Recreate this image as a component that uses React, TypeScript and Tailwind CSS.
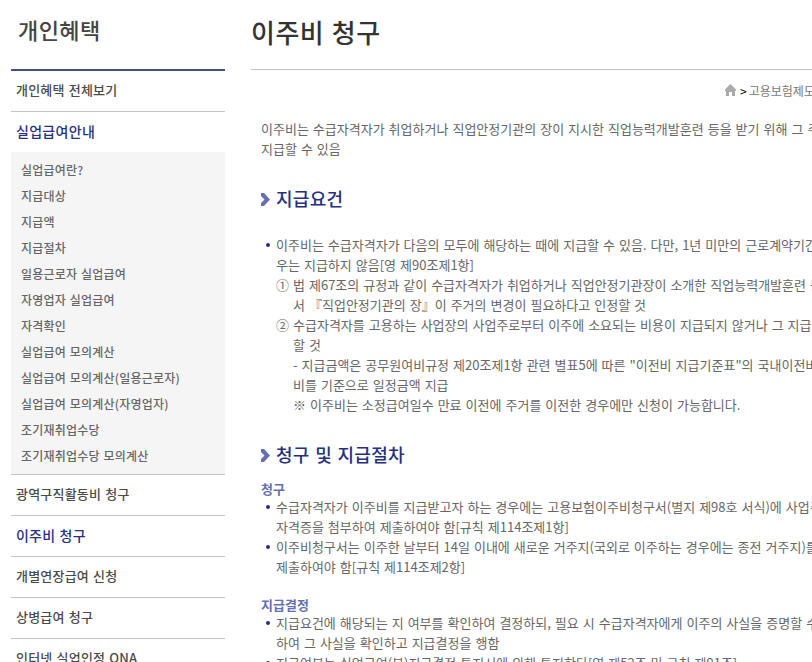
import React from "react";

const subMenu = [
  "실업급여란?",
  "지급대상",
  "지급액",
  "지급절차",
  "일용근로자 실업급여",
  "자영업자 실업급여",
  "자격확인",
  "실업급여 모의계산",
  "실업급여 모의계산(일용근로자)",
  "실업급여 모의계산(자영업자)",
  "조기재취업수당",
  "조기재취업수당 모의계산",
];

function MenuItem({ label, active }: { label: string; active?: boolean }) {
  return (
    <li className="h-[41px] border-t border-[#c4c4c4]">
      <a
        className={
          active
            ? "flex h-10 items-center pb-0.5 pl-[5px] text-[14px] font-medium tracking-[0.2px] text-[#26307e]"
            : "flex h-10 items-center pb-0.5 pl-[5px] text-[13px] font-medium tracking-[0.2px] text-[#4a4a4a]"
        }
      >
        {label}
      </a>
    </li>
  );
}

function Sidebar() {
  return (
    <aside className="w-[214px] shrink-0 [word-spacing:1px]">
      <h2 className="flex h-[69px] items-center pb-[11px] pl-[7px] text-[22px] font-medium tracking-[0.4px] text-[#444]">개인혜택</h2>
      <ul className="border-t-2 border-[#464c86]">
        <li className="flex h-10 items-center pb-0.5 pl-[5px] text-[13px] font-medium tracking-[0.2px] text-[#4a4a4a]">개인혜택 전체보기</li>
        <li className="border-t border-[#c4c4c4]">
          <a className="flex h-10 items-center pb-0.5 pl-[5px] text-[14px] font-medium tracking-[0.3px] text-[#26307e]">실업급여안내</a>
          <ul className="bg-[#f5f5f5] py-[5px]">
            {subMenu.map((label) => (
              <li key={label} className="flex h-[26px] items-center pl-2.5 text-[12px] font-medium tracking-[0.2px] text-[#666]">
                {label}
              </li>
            ))}
          </ul>
        </li>
        <MenuItem label="광역구직활동비 청구" />
        <MenuItem label="이주비 청구" active />
        <MenuItem label="개별연장급여 신청" />
        <MenuItem label="상병급여 청구" />
        <MenuItem label="인터넷 실업인정 QNA" />
      </ul>
    </aside>
  );
}

function Heading({ children }: { children: React.ReactNode }) {
  return (
    <h2 className="flex h-7 items-center pl-[10px] text-[18px] font-medium tracking-[0.3px] text-[#26307e]">
      <svg className="mr-[6px]" width="9" height="13" viewBox="0 0 9 13">
        <path d="M0 0h3l6 6.5L3 13H0v-3l3.500-3.500L0 3z" fill="#6670b0" />
      </svg>
      <span className="-mt-0.5">{children}</span>
    </h2>
  );
}

function Line({ children }: { children: React.ReactNode }) {
  return <p className="h-5 leading-5">{children}</p>;
}

function Bullet({ children }: { children: React.ReactNode }) {
  return (
    <li className="flex gap-[6px] pl-[15px]">
      <span className="mt-2 size-1 shrink-0 rounded-full bg-[#26307e]" />
      <div>{children}</div>
    </li>
  );
}

export default function App() {
  return (
    <div className="flex h-[662px] w-[812px] gap-[26px] overflow-hidden bg-white pl-[11px] font-['Noto_Sans_CJK_KR',sans-serif] whitespace-nowrap">
      <Sidebar />
      <main className="w-[561px] shrink-0 overflow-hidden text-[13px] text-[#666] [word-spacing:1.1px]">
        <h1 className="flex h-[69px] items-center pb-[7px] text-[26px] font-medium tracking-[0.5px] text-[#333]">이주비 청구</h1>
        <div className="flex h-[50px] items-start border-t border-[#c4c4c4] pt-[11px] pl-[474px] text-[12px]">
          <svg className="mt-[3px] shrink-0" width="11" height="12" viewBox="0 0 11 12">
            <path d="M5.500 0L11 5.500V7h-1v5H7V8H4v4H1V7H0V5.500z" fill="#aaa" />
          </svg>
          <span className="ml-1 leading-5 text-black">&gt;</span>
          <span className="ml-0.5 leading-5 text-[#777]">고용보험제도</span>
        </div>
        <div className="pl-[10px]">
          <Line>이주비는 수급자격자가 취업하거나 직업안정기관의 장이 지시한 직업능력개발훈련 등을 받기 위해 그 주</Line>
          <Line>지급할 수 있음</Line>
        </div>
        <div className="pt-[26px]">
          <Heading>지급요건</Heading>
        </div>
        <ul className="pt-[22px]">
          <Bullet>
            <Line>이주비는 수급자격자가 다음의 모두에 해당하는 때에 지급할 수 있음. 다만, 1년 미만의 근로계약기간</Line>
            <Line>우는 지급하지 않음[영 제90조제1항]</Line>
            <Line>① 법 제67조의 규정과 같이 수급자격자가 취업하거나 직업안정기관장이 소개한 직업능력개발훈련 등</Line>
            <div className="pl-[17px]">
              <Line>서 『직업안정기관의 장』이 주거의 변경이 필요하다고 인정할 것</Line>
            </div>
            <Line>② 수급자격자를 고용하는 사업장의 사업주로부터 이주에 소요되는 비용이 지급되지 않거나 그 지급</Line>
            <div className="pl-[17px]">
              <Line>할 것</Line>
              <Line>- 지급금액은 공무원여비규정 제20조제1항 관련 별표5에 따른 "이전비 지급기준표"의 국내이전비</Line>
              <Line>비를 기준으로 일정금액 지급</Line>
              <Line>※ 이주비는 소정급여일수 만료 이전에 주거를 이전한 경우에만 신청이 가능합니다.</Line>
            </div>
          </Bullet>
        </ul>
        <div className="pt-[26px]">
          <Heading>청구 및 지급절차</Heading>
        </div>
        <h3 className="mt-[10px] h-[18px] pl-[10px] leading-5 font-bold text-[#6670b0]">청구</h3>
        <ul>
          <Bullet>
            <Line>수급자격자가 이주비를 지급받고자 하는 경우에는 고용보험이주비청구서(별지 제98호 서식)에 사업주</Line>
            <Line>자격증을 첨부하여 제출하여야 함[규칙 제114조제1항]</Line>
          </Bullet>
          <Bullet>
            <Line>이주비청구서는 이주한 날부터 14일 이내에 새로운 거주지(국외로 이주하는 경우에는 종전 거주지)를</Line>
            <Line>제출하여야 함[규칙 제114조제2항]</Line>
          </Bullet>
        </ul>
        <h3 className="mt-[18px] h-[18px] pl-[10px] leading-5 font-bold text-[#6670b0]">지급결정</h3>
        <ul>
          <Bullet>
            <Line>지급요건에 해당되는 지 여부를 확인하여 결정하되, 필요 시 수급자격자에게 이주의 사실을 증명할 수</Line>
            <Line>하여 그 사실을 확인하고 지급결정을 행함</Line>
          </Bullet>
          <Bullet>
            <Line>지급여부는 실업급여(분)지급결정 통지서에 의해 통지한다[영 제52조 및 규칙 제91조]</Line>
          </Bullet>
        </ul>
      </main>
    </div>
  );
}
